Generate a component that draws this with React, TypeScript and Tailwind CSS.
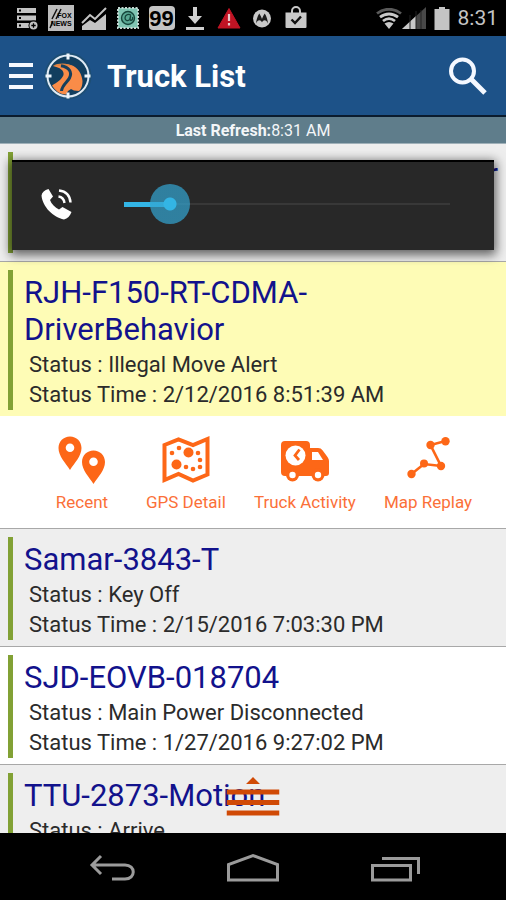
import { useState } from "react";

const TRUCKS = [
  {
    name: "RJH-F150-RT-CDMA-DriverBehavior",
    status: "Illegal Move Alert",
    time: "2/12/2016 8:51:39 AM",
    bg: "bg-[#fefcb6]",
    open: true,
  },
  {
    name: "Samar-3843-T",
    status: "Key Off",
    time: "2/15/2016 7:03:30 PM",
    bg: "bg-[#eeeeee]",
    open: false,
  },
  {
    name: "SJD-EOVB-018704",
    status: "Main Power Disconnected",
    time: "1/27/2016 9:27:02 PM",
    bg: "bg-white",
    open: false,
  },
  {
    name: "TTU-2873-Motion",
    status: "Arrive",
    time: "",
    bg: "bg-[#eeeeee]",
    open: false,
  },
];

// Status bar icons, all on a 26px box
function ServerIcon() {
  return (
    <svg viewBox="0 0 26 26" className="size-[26px]" fill="#c4c4c4">
      <path d="M3 3h19v5H3zM3 10.500h19v5H3zM3 18h13v5H3z" />
      <path d="M5 4.500h2v2H5zM5 12h2v2H5zM5 19.500h2v2H5z" fill="#000" />
      <circle cx="19.500" cy="20.500" r="5" fill="#000" />
      <circle cx="19.500" cy="20.500" r="4" />
      <path d="M17.300 20.500h4.400M19.500 18.300v4.400" stroke="#000" strokeWidth="1.300" />
    </svg>
  );
}

function NewsIcon() {
  return (
    <span className="relative flex size-[26px] flex-col items-end justify-center bg-[#bdbdbd] pr-0.5 font-['Liberation_Sans',sans-serif] text-[7px] leading-[8px] font-bold text-black">
      <svg viewBox="0 0 26 26" className="absolute inset-0 size-[26px]" stroke="#111" strokeWidth="1.500">
        <path d="M4 14L9 4M8 14l5-10M2 23l3-7" />
      </svg>
      <span className="relative pt-1">FOX</span>
      <span className="relative">NEWS</span>
    </span>
  );
}

function ChartIcon() {
  return (
    <svg viewBox="0 0 26 26" className="size-[26px]">
      <path d="M1 25v-4l8-6 5 3 11-9v16z" fill="#c4c4c4" />
      <path d="M1 18l8-8 5 4L25 3" fill="none" stroke="#c4c4c4" strokeWidth="2" />
    </svg>
  );
}

function StampIcon() {
  return (
    <svg viewBox="0 0 26 26" className="size-[26px]">
      <rect x="3" y="3" width="20" height="20" fill="#7fc5b2" />
      <rect x="3" y="3" width="20" height="20" fill="none" stroke="#c4d8d2" strokeWidth="2" strokeDasharray="2 1.500" />
      <circle cx="13" cy="13" r="6.500" fill="#5aa893" stroke="#16463b" strokeWidth="1.400" />
      <path
        d="M16 10.500c-2-2-6-1-6 2.500 0 3 3.500 3.500 4.800 1.200l.8-3.400c-.8 3.600-.6 4.700.6 4.500 1.500-.3 1.600-2 1.300-3.300"
        fill="none"
        stroke="#16463b"
        strokeWidth="1.300"
      />
    </svg>
  );
}

function DownloadIcon() {
  return (
    <svg viewBox="0 0 26 26" className="size-[26px]" fill="#d0d0d0">
      <path d="M11 2h4v9h5l-7 8-7-8h5zM4 22h18v3H4z" />
    </svg>
  );
}

function WarningIcon() {
  return (
    <svg viewBox="0 0 26 26" className="size-[26px]">
      <path d="M13 3.500L24 23H2z" fill="#c01424" stroke="#c01424" strokeWidth="1" strokeLinejoin="round" />
      <path d="M13 9v7M13 18v2.500" stroke="#e8c9cb" strokeWidth="2.200" />
    </svg>
  );
}

function MotoIcon() {
  return (
    <svg viewBox="0 0 26 26" className="size-[26px]">
      <circle cx="13" cy="13.500" r="9" fill="#c9c9c9" />
      <path
        d="M7 18.500c.5-4 1.500-7.500 3.300-10 1 1.500 2 3.500 2.700 5.500.7-2 1.700-4 2.700-5.500 1.800 2.500 2.800 6 3.300 10-1.200-2.500-2-3.300-3.300-3.300-1.200 0-2 .8-2.700 2-.7-1.200-1.500-2-2.700-2-1.300 0-2.100.8-3.300 3.300z"
        fill="#1d1d1d"
      />
    </svg>
  );
}

function BagIcon() {
  return (
    <svg viewBox="0 0 26 26" className="size-[26px]">
      <path d="M9 8V6a4 4 0 0 1 8 0v2" fill="none" stroke="#c9c9c9" strokeWidth="2" />
      <path d="M2.500 7.500h21V22a1 1 0 0 1-1 1h-19a1 1 0 0 1-1-1z" fill="#c9c9c9" />
      <path d="M8.500 14.500l3.500 3.500 6-6.500" fill="none" stroke="#111" strokeWidth="2.400" />
    </svg>
  );
}

function WifiIcon() {
  return (
    <svg viewBox="0 0 26 21" className="h-[21px] w-[26px]" fill="none" strokeWidth="2.800">
      <path d="M1 5.500C8-.200 18-.200 25 5.500" stroke="#5a5a5a" />
      <path d="M4 9.200c5.500-4.300 12.500-4.300 18 0" stroke="#c9c9c9" />
      <path d="M7 13c3.800-3 8.200-3 12 0" stroke="#c9c9c9" />
      <path d="M8.500 15.500c3-2 6-2 9 0L13 21z" fill="#c9c9c9" />
    </svg>
  );
}

function SignalIcon() {
  return (
    <svg viewBox="0 0 24 22" className="h-[22px] w-6">
      <path d="M0 22L24 0v22z" fill="#484848" />
      <path d="M0 22L14 9v13z" fill="#c9c9c9" />
      <path d="M8 8v14M14 4v18M19 3v19" stroke="#222" strokeWidth="1" />
    </svg>
  );
}

function BatteryIcon() {
  return (
    <svg viewBox="0 0 16 23" className="h-[23px] w-4" fill="#c4c4c4">
      <path d="M5 0h6v2h4.500v21H.5V2H5z" />
    </svg>
  );
}

function AppLogo() {
  return (
    <svg viewBox="0 0 48 48" className="size-12">
      <circle cx="24" cy="24" r="23.500" fill="#1d4e74" />
      <circle cx="24" cy="24" r="20.500" fill="#123e5e" />
      <path
        d="M9 14c4-2 12-3 18-1 7 2.500 11 9 11.500 16 0 4-1 8-3.500 10l-5-.5-3-1.500-3 2-2 3.500c-6 0-11-4-14-9 5-3 10-6 11.500-10.500C20.500 18.500 16 15.500 9 14z"
        fill="#f98c48"
      />
      <path d="M9 13.500c5-2.500 14-3.500 20 1-5-.8-8-.8-11-.5z" fill="#dd8442" />
      <path d="M17 13.800c8 1.500 11.500 6 8.500 12.200-2 4-7.500 7-8 13" fill="none" stroke="#163f5c" strokeWidth="3" />
      <circle cx="24" cy="24" r="20.500" fill="none" stroke="#dfeaf4" strokeWidth="2" />
      <path d="M24 1.500v6M24 40.500v6M1.500 24h6M40.500 24h6" stroke="#eef5fb" strokeWidth="3" />
    </svg>
  );
}

function SearchIcon() {
  return (
    <svg viewBox="0 0 40 40" className="size-10" fill="none" stroke="#f4f8ff">
      <circle cx="14.500" cy="15" r="11.500" strokeWidth="4" />
      <path d="M23 23l14 14" strokeWidth="5" />
    </svg>
  );
}

function PhoneIcon() {
  return (
    <svg viewBox="0 0 32 32" className="size-8" fill="#fff">
      <path d="M.5 7.500C1 4.500 3.500 2 7.500 1l4.500 7.500-3 3.500c1.500 4 5 7.500 9 9.500l3.500-2.500 9 5c-1.500 4-4 6.500-7.500 7.500C12.500 29.500 1.500 19 .5 7.500z" />
      <path d="M17.500 8.500c4 .5 5.500 2.800 6 6.500M18 2.500c7 .8 11 5.500 11.500 12" fill="none" stroke="#fff" strokeWidth="2.400" />
    </svg>
  );
}

// Action icons on a 48px box
function PinsIcon() {
  return (
    <svg viewBox="0 0 48 48" className="size-12" fill="#fd6717" fillRule="evenodd">
      <path d="M12 .5C5.500.500.500 5.500.500 12c0 8 7 15 11.500 22C16.500 27 23.500 20 23.500 12 23.500 5.500 18.500.500 12 .500zM12 7.500a4.300 4.300 0 1 1 0 8.600 4.300 4.300 0 0 1 0-8.600z" />
      <path d="M35.500 14.500c-6.500 0-11.500 5-11.500 11.500 0 8 7 15 11.500 22 4.500-7 11.500-14 11.500-22 0-6.500-5-11.500-11.500-11.500zM35.500 21.500a4.300 4.300 0 1 1 0 8.600 4.300 4.300 0 0 1 0-8.600z" />
    </svg>
  );
}

function MapIcon() {
  return (
    <svg viewBox="0 0 48 48" className="size-12" fill="#fd6717">
      <path d="M2.500 9L16.500 3.500 31 9l14.500-6v35.500L31 44.500 16.500 38 2.500 44z" fill="none" stroke="#fd6717" strokeWidth="4" />
      <circle cx="26.500" cy="16.500" r="5" />
      <circle cx="14.500" cy="28.500" r="5" />
      <circle cx="10" cy="17" r="2.300" />
      <circle cx="17" cy="12" r="2.300" />
      <circle cx="36" cy="17" r="2.300" />
      <circle cx="38" cy="24" r="2.300" />
      <circle cx="38" cy="31" r="2.300" />
      <circle cx="31" cy="33" r="2.300" />
      <circle cx="24" cy="31" r="2.300" />
    </svg>
  );
}

function TruckIcon() {
  return (
    <svg viewBox="0 0 48 48" className="size-12" fill="#fd6717">
      <path d="M4 5h21a4 4 0 0 1 4 4v3h8c2 0 3.500.8 4.700 2.500L46.500 21c.8 1.200 1.500 2.500 1.500 4.500V37a3 3 0 0 1-3 3H4a4 4 0 0 1-4-4V9a4 4 0 0 1 4-4z" />
      <path d="M31 16h6l5 8H31z" fill="#fff" />
      <circle cx="14.500" cy="19.500" r="10" fill="#fff" />
      <path d="M18.500 13.500L14 19.500l4 4.500" fill="none" stroke="#fd6717" strokeWidth="2.800" />
      <circle cx="11.500" cy="39" r="6.500" />
      <circle cx="37" cy="39" r="6.500" />
      <circle cx="11.500" cy="39" r="3.200" fill="#fff" />
      <circle cx="37" cy="39" r="3.200" fill="#fff" />
    </svg>
  );
}

function ReplayIcon() {
  return (
    <svg viewBox="0 0 48 48" className="size-12" fill="#fd6717">
      <path d="M7.500 38L20 28l17 2L26.500 9l15-4" fill="none" stroke="#fd6717" strokeWidth="2.600" />
      <circle cx="7.500" cy="38" r="4.200" />
      <circle cx="20" cy="27.500" r="4" />
      <circle cx="37" cy="30" r="4.200" />
      <circle cx="26.500" cy="9" r="4.200" />
      <circle cx="41.500" cy="5.200" r="4.200" />
    </svg>
  );
}

const ACTIONS = [
  { label: "Recent", Icon: PinsIcon },
  { label: "GPS Detail", Icon: MapIcon },
  { label: "Truck Activity", Icon: TruckIcon },
  { label: "Map Replay", Icon: ReplayIcon },
];

function StatusBar() {
  return (
    <div className="flex h-9 shrink-0 items-center justify-between bg-black pr-2 pl-[14px]">
      <div className="flex w-[61%] items-center justify-between">
        <ServerIcon />
        <NewsIcon />
        <ChartIcon />
        <StampIcon />
        <span className="flex h-6 w-[26px] items-center justify-center rounded-sm bg-[#c4c4c4] font-['Liberation_Sans',sans-serif] text-[22px] font-bold text-black">
          99
        </span>
        <DownloadIcon />
        <WarningIcon />
        <MotoIcon />
        <BagIcon />
      </div>
      <div className="flex items-center">
        <WifiIcon />
        <SignalIcon />
        <span className="mx-2">
          <BatteryIcon />
        </span>
        <span className="text-[21px] leading-6 text-[#c4c4c4]">8:31</span>
      </div>
    </div>
  );
}

function Header() {
  return (
    <header className="flex h-[81px] shrink-0 items-center border-b-2 border-[#0b1c2e] bg-[#1d5288] pr-[18px] pl-[9px] text-white">
      <button aria-label="Menu" className="flex w-6 flex-col gap-[7px]">
        <span className="h-1 bg-[#f4f8ff]" />
        <span className="h-1 bg-[#f4f8ff]" />
        <span className="h-1 bg-[#f4f8ff]" />
      </button>
      <span className="ml-[11px]">
        <AppLogo />
      </span>
      <h1 className="ml-[15px] flex-1 pt-1 text-[31px] font-bold">Truck List</h1>
      <button aria-label="Search">
        <SearchIcon />
      </button>
    </header>
  );
}

function VolumePanel() {
  const [volume, setVolume] = useState(9);

  return (
    <div className="absolute inset-x-3 top-4 flex h-[90px] items-center border-t-2 border-black bg-[#282828] pr-11 pb-1 pl-[29px] shadow-[0_3px_10px_2px_rgba(0,0,0,0.6)]">
      <PhoneIcon />
      <div className="relative ml-[51px] flex h-10 flex-1 items-center">
        <span className="absolute inset-x-0 h-[2px] bg-[#383838]" />
        <span
          className="absolute left-0 h-[5px] bg-[#33b5e5]"
          style={{ width: `calc(20px + (100% - 40px) * ${volume / 100})` }}
        />
        <input
          type="range"
          aria-label="Call volume"
          min={0}
          max={100}
          value={volume}
          onChange={(e) => setVolume(Number(e.target.value))}
          className="relative h-10 w-full cursor-pointer appearance-none bg-transparent outline-none [&::-webkit-slider-thumb]:size-10 [&::-webkit-slider-thumb]:appearance-none [&::-webkit-slider-thumb]:rounded-full [&::-webkit-slider-thumb]:bg-[radial-gradient(circle,#33b5e5_6px,rgba(51,165,210,0.7)_7px)]"
        />
      </div>
    </div>
  );
}

function TruckActions() {
  return (
    <div className="flex h-28 items-start gap-7 bg-white pt-5 pl-[46px]">
      {ACTIONS.map(({ label, Icon }) => (
        <button
          key={label}
          className="flex min-w-[72px] flex-col items-center gap-[6px] text-[17px] leading-6 whitespace-nowrap text-[#fb7038]"
        >
          <Icon />
          {label}
        </button>
      ))}
    </div>
  );
}

export default function App() {
  return (
    <div className="flex h-screen flex-col overflow-hidden bg-black font-[Roboto,sans-serif]">
      <StatusBar />
      <Header />
      <div className="flex h-[27px] shrink-0 items-center justify-center border-b border-[#9fb0b8] bg-[#5f7d8b] pt-0.5 text-[16px] text-[#f3f6f8]">
        <b>Last Refresh:</b>8:31 AM
      </div>

      <main className="relative flex-1 overflow-hidden bg-[#eeeeee]">
        <ul>
          <li className="border-b border-[#a8a8a8] p-2">
            <div className="h-[101px] border-l-[5px] border-[#82a135] pt-1 text-right text-[31px] leading-[37px] text-[#12128c]">
              r
            </div>
          </li>
          {TRUCKS.map((truck) => (
            <li key={truck.name} className="border-b border-[#a8a8a8]">
              <div className={`${truck.bg} p-2`}>
                <div className="border-l-[5px] border-[#82a135] pt-1 pl-[11px]">
                  <h2 className="max-w-[360px] text-[31px] leading-[37px] text-[#12128c]">{truck.name}</h2>
                  <div className="-mb-0.5 pt-0.5 pl-[5px] text-[22px] leading-[30px] text-[#2b2b2b]">
                    <p>Status : {truck.status}</p>
                    {truck.time && <p>Status Time : {truck.time}</p>}
                  </div>
                </div>
              </div>
              {truck.open && <TruckActions />}
            </li>
          ))}
        </ul>

        <VolumePanel />

        <button aria-label="Open drawer" className="absolute bottom-4 left-1/2 -translate-x-1/2">
          <svg viewBox="0 0 53 40" className="h-10 w-[53px]" fill="#d04a06">
            <path d="M26.500 0l7 7h-14zM0 12.500h53v5H0zM0 23h53v5H0zM0 33.500h53v5H0z" />
          </svg>
        </button>
      </main>

      <nav className="flex h-[67px] shrink-0 items-center justify-center gap-[88px]">
        <button aria-label="Back">
          <svg viewBox="0 0 54 32" className="h-8 w-[54px]" fill="none" stroke="#9b9b9b" strokeWidth="3">
            <path d="M17 5L8 14l9 9M8 14h33c11 0 11 14 0 14H28" />
          </svg>
        </button>
        <button aria-label="Home">
          <svg viewBox="0 0 54 32" className="h-8 w-[54px]" fill="none" stroke="#9b9b9b" strokeWidth="3">
            <path d="M2.500 29V13.500L27 4.500l24.500 9V29z" />
          </svg>
        </button>
        <button aria-label="Recent apps">
          <svg viewBox="0 0 54 32" className="h-8 w-[54px]" fill="none" stroke="#9b9b9b" strokeWidth="3">
            <path d="M4.500 14.500h38V29h-38zM14 7.500h36.500V23" />
          </svg>
        </button>
      </nav>
    </div>
  );
}
